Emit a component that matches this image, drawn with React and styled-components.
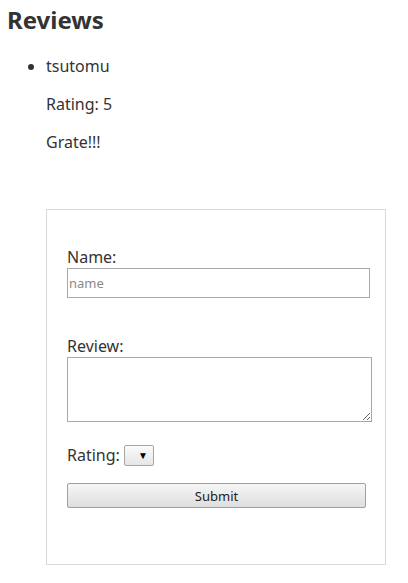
import React from "react";
import styled, { createGlobalStyle } from "styled-components";

const Global = createGlobalStyle`
  body {
    margin: 8px 6px;
    font-family: "Noto Sans", "Open Sans", sans-serif;
    color: #333;
    background: #fff;
  }
`;

const Title = styled.h2`
  margin: 0 0 0 1px;
  font-size: 24px;
  line-height: 24px;
  font-weight: 700;
`;

const List = styled.ul`
  margin: 23px 0 0;
  padding-left: 40px;
`;

const Item = styled.li`
  font-size: 16px;
  line-height: 22px;
`;

const Para = styled.p`
  margin: 16px 0 0;
`;

const FormBox = styled.form`
  margin: 56px 0 0 40px;
  width: 340px;
  height: 356px;
  border: 1px solid #d8d8d8;
  box-sizing: border-box;
  padding: 36px 0 0 20px;
  display: flex;
  flex-direction: column;
`;

const Label = styled.label`
  display: block;
  font-size: 16px;
  line-height: 22px;
  margin-top: ${(p) => p.$top || 0}px;
`;

const TextInput = styled.input`
  display: block;
  width: 303px;
  height: 30px;
  box-sizing: border-box;
  border: 1px solid #a9a9a9;
  padding: 0 1px;
  font-family: "Noto Sans", sans-serif;
  font-size: 13px;
  color: #333;
  outline: none;
  &::placeholder {
    color: #8a8a8a;
  }
`;

const TextArea = styled.textarea`
  display: block;
  width: 305px;
  height: 65px;
  box-sizing: border-box;
  border: 1px solid #a9a9a9;
  font-family: "Noto Sans", sans-serif;
  outline: none;
  resize: both;
`;

const Row = styled.div`
  display: flex;
  align-items: center;
  gap: 4px;
  margin-top: 22px;
  font-size: 16px;
  line-height: 22px;
`;

const SelectBox = styled.div`
  width: 30px;
  height: 21px;
  box-sizing: border-box;
  border: 1px solid #a6a6a6;
  border-radius: 2px;
  background: linear-gradient(#fafafa, #e6e6e6);
  display: flex;
  align-items: center;
  justify-content: flex-end;
  padding-right: 5px;
  font-size: 10px;
  color: #000;
`;

const Button = styled.button`
  margin-top: 17px;
  width: 299px;
  height: 25px;
  box-sizing: border-box;
  border: 1px solid #a0a0a0;
  border-radius: 2px;
  background: linear-gradient(#f6f6f6, #dedede);
  font-family: "Noto Sans", sans-serif;
  font-size: 13px;
  color: #222;
  padding: 0;
`;

export default function App() {
  return (
    <>
      <Global />
      <Title>Reviews</Title>
      <List>
        <Item>
          tsutomu
          <Para>Rating: 5</Para>
          <Para>Grate!!!</Para>
        </Item>
      </List>
      <FormBox onSubmit={(e) => e.preventDefault()}>
        <Label>Name:</Label>
        <TextInput placeholder="name" />
        <Label $top={37}>Review:</Label>
        <TextArea />
        <Row>
          <span>Rating:</span>
          <SelectBox>▼</SelectBox>
        </Row>
        <Button type="submit">Submit</Button>
      </FormBox>
    </>
  );
}
